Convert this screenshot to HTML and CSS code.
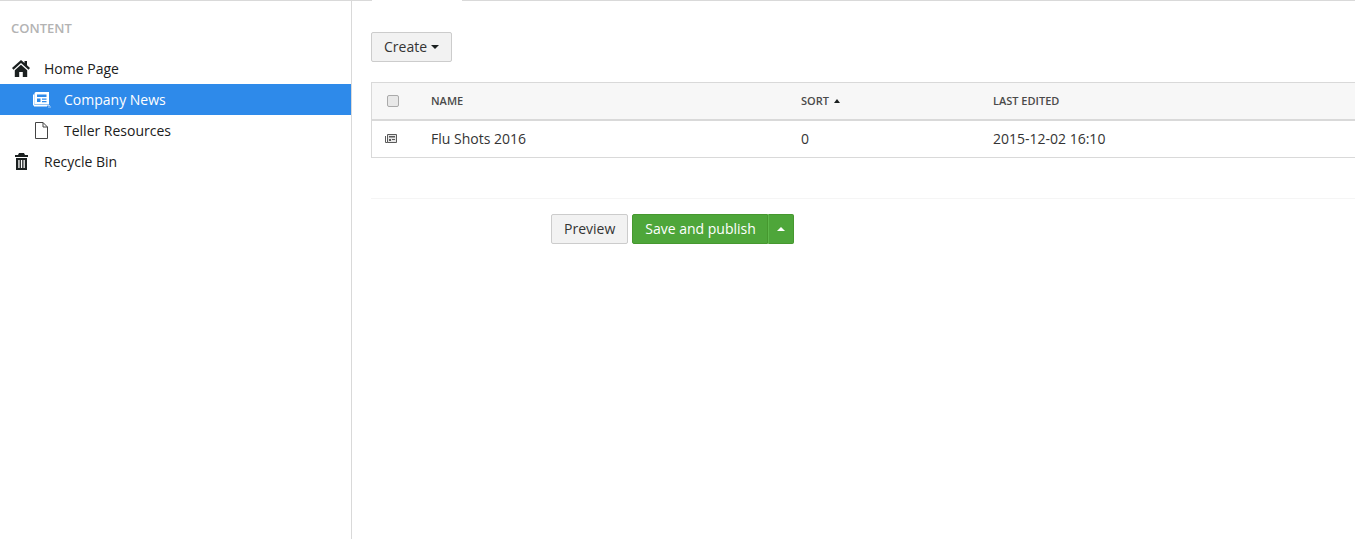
FILE: index.html
```html
<!DOCTYPE html>
<html lang="en">
<head>
<meta charset="utf-8">
<title>Content</title>
<link rel="stylesheet" href="styles.css">
</head>
<body>
<div class="app">
  <aside class="sidebar">
    <h5 class="section-title">CONTENT</h5>
    <ul class="tree">
      <li class="node">
        <svg class="icon icon-home" width="18" height="17" viewBox="0 0 18 17"><path fill="#1b2020" d="M9 0 0 8l1.500 1.700L9 3l7.500 6.700L18 8l-3-2.700V1h-2.500v2.100z"/><path fill="#1b2020" d="M9 4.700 2.800 10.200V17h4.400v-5h3.600v5h4.400v-6.800z"/></svg>
        <span>Home Page</span>
      </li>
      <li class="node child active">
        <svg class="icon icon-news" width="18" height="16" viewBox="0 0 18 16"><path fill="#fff" d="M3 0h13v12.500H1.500V1.500A1.500 1.500 0 0 1 3 0z"/><path fill="#fff" d="M0 2.500h1.500v11H0zM1 13h13v1.500H1z"/><path fill="#2e8aea" d="M4 2.500h9.500v2.500H4zM4 6.500h3.500v3.500H4zM9 6.500h4.500v1.200H9zM9 9h4.500v1.200H9z"/><path fill="#a9cdf6" d="M14 13h3v1h-3zM15 14.500h3v1h-3z"/></svg>
        <span>Company News</span>
      </li>
      <li class="node child">
        <svg class="icon icon-page" width="13" height="17" viewBox="0 0 13 17"><path fill="none" stroke="#444" d="M.5.500h7.500l4.500 4.500v11.500H.5z"/><path fill="none" stroke="#444" d="M8 .5v4.500h4.500"/></svg>
        <span>Teller Resources</span>
      </li>
      <li class="node">
        <svg class="icon icon-bin" width="13" height="17" viewBox="0 0 13 17"><path fill="#1b2020" d="M4 0h5l1 2h3v2H0V2h3z"/><path fill="#1b2020" fill-rule="evenodd" d="M1 5h11v12H1zM3.300 7v8h1.300V7zm2.600 0v8h1.300V7zm2.600 0v8h1.300V7z"/></svg>
        <span>Recycle Bin</span>
      </li>
    </ul>
  </aside>
  <main class="main">
    <div class="tabs"><div class="tab-active"></div></div>
    <div class="toolbar">
      <button class="btn">Create <span class="caret"></span></button>
    </div>
    <div class="table">
      <div class="row head">
        <div class="col-check"><span class="checkbox"></span></div>
        <div class="col-name">NAME</div>
        <div class="col-sort">SORT <span class="caret up small"></span></div>
        <div class="col-edit">LAST EDITED</div>
      </div>
      <div class="row body">
        <div class="col-check">
          <svg class="row-icon" width="12" height="10" viewBox="0 0 12 10"><path fill="#e6e6e6" d="M2.500.5h9v8h-9z"/><path fill="none" stroke="#5a5a5a" d="M2.500.5h9v8h-9zM.5 2v6.500h2"/><path fill="#5a5a5a" d="M4 2h6v1.500H4zM4 5h2v2H4zM7 5h3v1H7z"/></svg>
        </div>
        <div class="col-name">Flu Shots 2016</div>
        <div class="col-sort">0</div>
        <div class="col-edit">2015-12-02 16:10</div>
      </div>
    </div>
    <div class="actions">
      <button class="btn">Preview</button>
      <div class="split">
        <button class="btn-green main-action">Save and publish</button>
        <button class="btn-green toggle"><span class="caret up white"></span></button>
      </div>
    </div>
  </main>
</div>
</body>
</html>
```
FILE: styles.css
```css
* { box-sizing: border-box; }
html, body { margin: 0; height: 100%; overflow: hidden; }
body { font-family: "Open Sans", sans-serif; font-size: 14px; color: #343434; background: #fff; }
.app { display: flex; height: 539px; }
.sidebar { width: 352px; flex: none; border-right: 1px solid #d9d9d9; border-top: 1px solid #d9d9d9; }
.section-title { margin: 0; padding: 18px 0 0 11px; height: 52px; font-size: 13px; line-height: 18px; font-weight: 600; color: #b3b3b3; }
.tree { list-style: none; margin: 0; padding: 0; }
.node { display: flex; align-items: center; height: 31px; padding-left: 11px; color: #1b2020; }
.child { padding-left: 32px; }
.icon { flex: none; }
.icon-home { margin: 0 14px 0 1px; }
.icon-news { margin: 0 13px 0 1px; }
.icon-page { margin: 0 16px 0 3px; }
.icon-bin { margin: 0 16px 0 4px; }
.active { background: #2e8aea; color: #fff; }
.main { flex: 1; min-width: 0; padding-left: 19px; }
.tabs { height: 1px; background: #d9d9d9; margin-left: -19px; position: relative; }
.tab-active { position: absolute; left: 20px; top: 0; width: 90px; height: 1px; background: #fff; }
.toolbar { padding-top: 31px; height: 81px; }
.btn { height: 30px; padding: 0 12px; font: 14px/20px "Open Sans", sans-serif; color: #343434; background: #f2f2f2; border: 1px solid #ccc; border-radius: 2px; display: inline-flex; align-items: center; gap: 4px; }
.caret { display: inline-block; width: 0; height: 0; border-left: 4px solid transparent; border-right: 4px solid transparent; border-top: 4px solid #1b2020; }
.caret.up { border-top: 0; border-bottom: 4px solid #1b2020; }
.caret.small { border-left-width: 3.5px; border-right-width: 3.5px; margin: 0 0 2px 2px; vertical-align: middle; }
.caret.white { border-bottom-color: #fff; }
.table { border: 1px solid #d9d9d9; border-right: 0; width: 990px; }
.row { display: flex; align-items: center; }
.head { height: 38px; padding-bottom: 2px; background: #f7f7f7; border-bottom: 2px solid #d9d9d9; font-size: 11px; font-weight: 600; color: #4a4a4a; }
.body { height: 36px; padding-bottom: 2px; }
.col-check { width: 59px; flex: none; padding-left: 14px; display: flex; align-items: center; }
.head .col-check { padding-top: 2px; }
.body .col-check { padding-top: 2px; }
.row-icon { margin-left: -1px; }
.col-name { width: 370px; flex: none; }
.col-sort { width: 192px; flex: none; }
.col-edit { flex: 1; }
.checkbox { width: 12px; height: 12px; margin-left: 1px; background: #e8e8e8; border: 1px solid #aaa; border-radius: 2px; }
.actions { display: flex; gap: 4px; margin-top: 40px; padding: 15px 0 0 180px; border-top: 1px solid #f5f5f5; }
.split { display: flex; }
.btn-green { height: 30px; padding: 0 12px; font: 14px/20px "Open Sans", sans-serif; color: #fff; background: #4ea63a; border: 1px solid #46982f; border-radius: 2px 0 0 2px; }
.main-action { padding-right: 11px; }
.btn-green.toggle { width: 26px; padding: 0; border-left-color: #5db84a; border-radius: 0 2px 2px 0; display: flex; align-items: center; justify-content: center; }
```
